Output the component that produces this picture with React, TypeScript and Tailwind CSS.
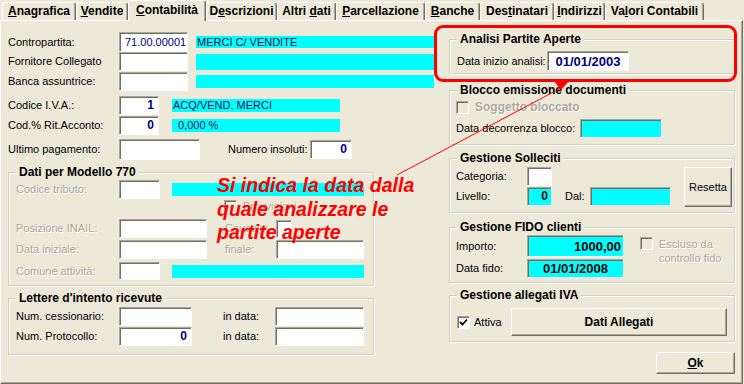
import React from "react"

const sunken =
    "border border-t-[#aca899] border-l-[#aca899] border-r-white border-b-white shadow-[inset_1px_1px_0_#716f64]"
const raised =
    "border border-t-white border-l-white border-r-[#716f64] border-b-[#716f64] shadow-[inset_-1px_-1px_0_#aca899]"
const dim = "text-[#aca899] [text-shadow:1px_1px_0_#ffffff]"

const tabs = [
    { label: "Anagrafica", u: 0, w: "w-[74px]" },
    { label: "Vendite", u: 0, w: "w-[52px]" },
    { label: "Contabilità", u: 0, w: "w-[78px]", active: true },
    { label: "Descrizioni", u: 1, w: "w-[71px]" },
    { label: "Altri dati", u: 6, w: "w-[59px]" },
    { label: "Parcellazione", u: 0, w: "w-[89px]" },
    { label: "Banche", u: 0, w: "w-[55px]" },
    { label: "Destinatari", u: 3, w: "w-[74px]" },
    { label: "Indirizzi", u: 0, w: "w-[51px]" },
    { label: "Valori Contabili", u: 2, w: "w-[99px]" },
]

function Mnemonic({ text, u }: { text: string; u: number }) {
    return (
        <>
            {text.slice(0, u)}
            <span className="underline underline-offset-1">{text[u]}</span>
            {text.slice(u + 1)}
        </>
    )
}

function Field({ className = "", children }: { className?: string; children?: React.ReactNode }) {
    return <div className={`${sunken} flex items-center shrink-0 overflow-hidden whitespace-nowrap ${className}`}>{children}</div>
}

function Cyan({ className = "", children }: { className?: string; children?: React.ReactNode }) {
    return <div className={`bg-[#00ffff] flex items-center shrink-0 whitespace-nowrap text-[#10104a] ${className}`}>{children}</div>
}

function Check({ checked = false, disabled = false }: { checked?: boolean; disabled?: boolean }) {
    return (
        <span className={`${sunken} w-[13px] h-[13px] shrink-0 flex items-center justify-center ${disabled ? "bg-[#ece9d8]" : "bg-white"}`}>
            {checked && (
                <svg width="9" height="9" viewBox="0 0 9 9">
                    <polyline points="1,4 3.5,6.5 8,1.5" fill="none" stroke="#000" strokeWidth="1.8" />
                </svg>
            )}
        </span>
    )
}

function Group({ title, className = "", children }: { title: string; className?: string; children?: React.ReactNode }) {
    return (
        <fieldset className={`border border-[#d0d0bf] shadow-[1px_1px_0_#ffffff,inset_1px_1px_0_#ffffff] min-w-0 ${className}`}>
            <legend className="ml-[7px] px-[3px] bg-[#ece9d8] font-bold text-[12px] leading-[14px] text-black">{title}</legend>
            {children}
        </fieldset>
    )
}

export default function App() {
    return (
        <div className="relative w-[744px] h-[384px] overflow-hidden bg-[#ece9d8] text-black text-[11px] leading-[13px] font-['Liberation_Sans',Arial,sans-serif]">
            {/* tab strip */}
            <div className="flex items-end h-[20px] pl-[2px]">
                {tabs.map((t) =>
                    t.active ? (
                        <div
                            key={t.label}
                            className={`${t.w} relative z-10 -mb-px h-[21px] bg-[#ece9d8] border-t border-l border-r border-t-white border-l-white border-r-[#716f64] shadow-[inset_-1px_0_0_#aca899] rounded-t-[3px] text-center font-bold text-[12px] leading-[18px]`}
                        >
                            <Mnemonic text={t.label} u={t.u} />
                        </div>
                    ) : (
                        <div
                            key={t.label}
                            className={`${t.w} h-[18px] border-t border-l border-r border-t-white border-l-white border-r-[#716f64] shadow-[inset_-1px_0_0_#aca899] rounded-t-[3px] text-center font-bold text-[12px] leading-[17px] whitespace-nowrap`}
                        >
                            <Mnemonic text={t.label} u={t.u} />
                        </div>
                    )
                )}
            </div>

            {/* page */}
            <div className="flex w-[743px] h-[364px] pl-[7px] border-t border-l border-r border-b border-t-white border-l-white border-r-[#716f64] border-b-[#716f64] shadow-[inset_-1px_-1px_0_#aca899]">
                {/* left column */}
                <div className="w-[426px] shrink-0 flex flex-col">
                    <div className="flex items-center h-[20px] mt-[11px]">
                        <span className="w-[111px] shrink-0">Contropartita:</span>
                        <Field className="w-[69px] h-[20px] bg-white text-[#000080] pl-[5px]">71.00.00001</Field>
                        <Cyan className="ml-[8px] w-[238px] h-[12px] pl-[1px]">MERCI C/ VENDITE</Cyan>
                    </div>
                    <div className="flex items-center h-[19px]">
                        <span className="w-[111px] shrink-0">Fornitore Collegato</span>
                        <Field className="w-[69px] h-[19px] bg-white" />
                        <Cyan className="ml-[8px] w-[238px] h-[16px]" />
                    </div>
                    <div className="flex items-center h-[19px] mt-[1px]">
                        <span className="w-[111px] shrink-0">Banca assuntrice:</span>
                        <Field className="w-[69px] h-[19px] bg-white" />
                        <Cyan className="ml-[8px] w-[238px] h-[13px]" />
                    </div>
                    <div className="flex items-center h-[19px] mt-[5px]">
                        <span className="w-[111px] shrink-0">Codice I.V.A.:</span>
                        <Field className="w-[40px] h-[19px] bg-white justify-end pr-[4px] font-bold text-[12px] text-[#000080]">1</Field>
                        <Cyan className="ml-[13px] w-[168px] h-[13px] pl-[1px]">ACQ/VEND. MERCI</Cyan>
                    </div>
                    <div className="flex items-center h-[19px] mt-[1px]">
                        <span className="w-[111px] shrink-0">Cod.% Rit.Acconto:</span>
                        <Field className="w-[40px] h-[19px] bg-white justify-end pr-[4px] font-bold text-[12px] text-[#000080]">0</Field>
                        <Cyan className="ml-[13px] w-[168px] h-[13px] pl-[6px]">0,000 %</Cyan>
                    </div>
                    <div className="flex items-center h-[21px] mt-[4px]">
                        <span className="w-[111px] shrink-0">Ultimo pagamento:</span>
                        <Field className="w-[81px] h-[21px] bg-white" />
                        <span className="ml-[28px] w-[82px] shrink-0">Numero insoluti:</span>
                        <Field className="w-[42px] h-[19px] bg-white justify-end pr-[4px] font-bold text-[12px] text-[#000080]">0</Field>
                    </div>

                    <Group title="Dati per Modello 770" className="mt-[5px] w-[366px] pb-[5px]">
                        <div className="flex items-center h-[19px] mt-[1px] pl-[7px]">
                            <span className={`w-[103px] shrink-0 ${dim}`}>Codice tributo:</span>
                            <Field className="w-[41px] h-[19px] bg-white" />
                            <Cyan className="ml-[12px] w-[192px] h-[13px]" />
                        </div>
                        <div className="flex items-center h-[13px] mt-[1px] pl-[215px]">
                            <Check disabled />
                            <span className={`ml-[6px] ${dim}`}>Provvigioni</span>
                        </div>
                        <div className="flex items-center h-[19px] mt-[6px] pl-[7px]">
                            <span className={`w-[103px] shrink-0 ${dim}`}>Posizione INAIL:</span>
                            <Field className="w-[88px] h-[19px] bg-white" />
                            <span className={`ml-[18px] w-[51px] shrink-0 ${dim}`}>Causale:</span>
                            <Field className="w-[16px] h-[18px] bg-white" />
                        </div>
                        <div className="flex items-center h-[19px] mt-[2px] pl-[7px]">
                            <span className={`w-[103px] shrink-0 ${dim}`}>Data iniziale:</span>
                            <Field className="w-[88px] h-[19px] bg-white" />
                            <span className={`ml-[18px] w-[51px] shrink-0 ${dim}`}>finale:</span>
                            <Field className="w-[88px] h-[19px] bg-white" />
                        </div>
                        <div className="flex items-center h-[18px] mt-[3px] pl-[7px]">
                            <span className={`w-[103px] shrink-0 ${dim}`}>Comune attività:</span>
                            <Field className="w-[41px] h-[18px] bg-white" />
                            <Cyan className="ml-[12px] w-[192px] h-[13px]" />
                        </div>
                    </Group>

                    <Group title="Lettere d'intento ricevute" className="mt-[5px] w-[366px] pb-[8px]">
                        <div className="flex items-center h-[19px] mt-[2px] pl-[7px]">
                            <span className="w-[103px] shrink-0">Num. cessionario:</span>
                            <Field className="w-[73px] h-[19px] bg-white" />
                            <span className="ml-[31px] w-[52px] shrink-0">in data:</span>
                            <Field className="w-[89px] h-[19px] bg-white" />
                        </div>
                        <div className="flex items-center h-[19px] mt-[1px] pl-[7px]">
                            <span className="w-[103px] shrink-0">Num. Protocollo:</span>
                            <Field className="w-[73px] h-[19px] bg-white justify-end pr-[4px] font-bold text-[12px] text-[#000080]">0</Field>
                            <span className="ml-[31px] w-[52px] shrink-0">in data:</span>
                            <Field className="w-[89px] h-[19px] bg-white" />
                        </div>
                    </Group>
                </div>

                {/* right column */}
                <div className="w-[286px] ml-[15px] shrink-0 flex flex-col">
                    <Group title="Analisi Partite Aperte" className="mt-[11px] pb-[2px]">
                        <div className="flex items-center h-[20px] mt-[5px] pl-[7px]">
                            <span className="w-[90px] shrink-0 whitespace-nowrap">Data inizio analisi:</span>
                            <Field className="w-[82px] h-[20px] bg-white justify-center font-bold text-[13px] text-[#000080]">01/01/2003</Field>
                        </div>
                    </Group>

                    <Group title="Blocco emissione documenti" className="mt-[9px] pb-[6px]">
                        <div className="flex items-center h-[14px] mt-[3px] pl-[6px]">
                            <Check disabled />
                            <span className={`ml-[6px] font-bold text-[12px] ${dim}`}>Soggetto bloccato</span>
                        </div>
                        <div className="flex items-center h-[19px] mt-[5px] pl-[6px]">
                            <span className="w-[124px] shrink-0 whitespace-nowrap">Data decorrenza blocco:</span>
                            <Field className="w-[82px] h-[19px] bg-[#00ffff]" />
                        </div>
                    </Group>

                    <Group title="Gestione Solleciti" className="mt-[6px] pb-[5px]">
                        <div className="flex items-start pl-[6px]">
                            <div className="w-[215px] shrink-0 flex flex-col">
                                <div className="flex items-center h-[19px] mt-[2px]">
                                    <span className="w-[71px] shrink-0">Categoria:</span>
                                    <Field className="w-[25px] h-[19px] bg-white" />
                                </div>
                                <div className="flex items-center h-[19px] mt-[1px]">
                                    <span className="w-[71px] shrink-0">Livello:</span>
                                    <Field className="w-[25px] h-[19px] bg-[#00ffff] justify-end pr-[3px] font-bold text-[12px]">0</Field>
                                    <span className="ml-[13px] w-[25px] shrink-0">Dal:</span>
                                    <Field className="w-[81px] h-[19px] bg-[#00ffff]" />
                                </div>
                            </div>
                            <button className={`${raised} ml-[13px] mt-[2px] w-[48px] h-[40px] bg-[#ece9d8] text-[11px]`}>Resetta</button>
                        </div>
                    </Group>

                    <Group title="Gestione FIDO clienti" className="mt-[7px] pb-[4px]">
                        <div className="flex items-start pl-[6px]">
                            <div className="flex flex-col">
                                <div className="flex items-center h-[22px] mt-[1px]">
                                    <span className="w-[71px] shrink-0">Importo:</span>
                                    <Field className="w-[97px] h-[22px] bg-[#00ffff] justify-end pr-[2px] font-bold text-[13px]">1000,00</Field>
                                </div>
                                <div className="flex items-center h-[19px] mt-[2px]">
                                    <span className="w-[71px] shrink-0">Data fido:</span>
                                    <Field className="w-[97px] h-[19px] bg-[#00ffff] justify-center font-bold text-[13px]">01/01/2008</Field>
                                </div>
                            </div>
                            <div className="flex items-start ml-[16px] mt-[3px]">
                                <Check disabled />
                                <span className={`ml-[6px] leading-[14px] ${dim}`}>
                                    Escluso da
                                    <br />
                                    controllo fido
                                </span>
                            </div>
                        </div>
                    </Group>

                    <Group title="Gestione allegati IVA" className="mt-[5px] pb-[5px]">
                        <div className="flex items-center h-[28px] mt-[6px] pl-[7px]">
                            <Check checked />
                            <span className="ml-[4px] w-[37px] shrink-0">Attiva</span>
                            <button className={`${raised} w-[216px] h-[28px] bg-[#ece9d8] font-bold text-[12px]`}>Dati Allegati</button>
                        </div>
                    </Group>

                    <button className={`${raised} self-end mt-[10px] w-[79px] h-[22px] bg-[#ece9d8] font-bold text-[12px]`}>
                        <Mnemonic text="Ok" u={0} />
                    </button>
                </div>
            </div>

            {/* annotation overlay */}
            <div className="absolute left-[434px] top-[25px] w-[303px] h-[57px] border-[3px] border-[#ff0000] rounded-[9px]" />
            <svg className="absolute left-0 top-0 pointer-events-none" width="744" height="384">
                <line x1="397" y1="175" x2="561" y2="88" stroke="#ff0000" strokeWidth="1" />
                <polygon points="554,81 569,81 561,90" fill="#ff0000" />
            </svg>
            <div className="absolute left-[217px] top-[174px] text-[#ff0000] font-bold italic text-[19.5px] leading-[23.5px] whitespace-nowrap font-['Liberation_Sans',Arial,sans-serif]">
                Si indica la data dalla
                <br />
                quale analizzare le
                <br />
                partite aperte
            </div>
        </div>
    )
}
